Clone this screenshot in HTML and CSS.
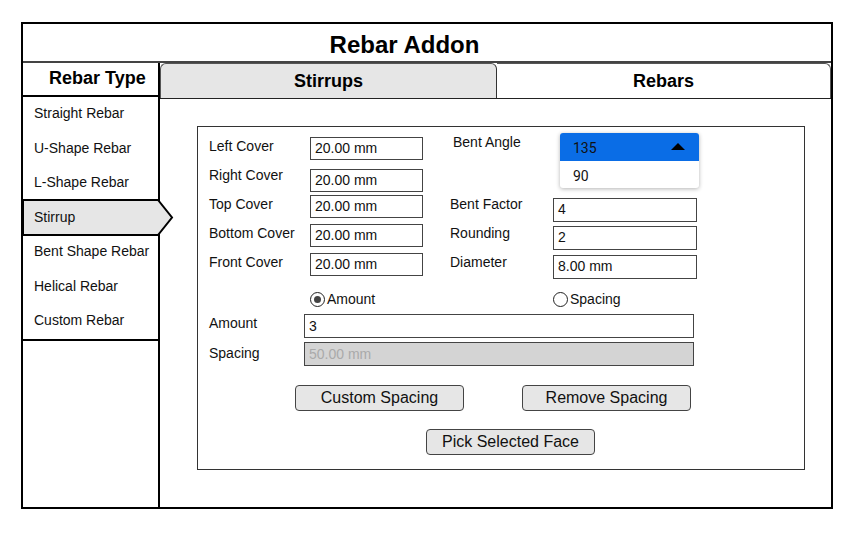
FILE: index.html
```html
<!DOCTYPE html>
<html>
<head>
<meta charset="utf-8">
<link rel="stylesheet" href="styles.css">
</head>
<body>
<div class="frame">
  <div class="header">Rebar Addon</div>
  <div class="body">
    <div class="sidebar">
      <div class="side-head">Rebar Type</div>
      <ul class="side-list">
        <li class="side-item">Straight Rebar</li>
        <li class="side-item">U-Shape Rebar</li>
        <li class="side-item">L-Shape Rebar</li>
        <li class="side-item selected">
          <svg class="sel-shape" width="152" height="38" viewBox="0 0 152 38">
            <polygon points="0,1 135,1 149,18.5 135,36 0,36" fill="#e6e6e6" stroke="#000" stroke-width="2"/>
          </svg>
          <span class="sel-label">Stirrup</span>
        </li>
        <li class="side-item">Bent Shape Rebar</li>
        <li class="side-item">Helical Rebar</li>
        <li class="side-item">Custom Rebar</li>
      </ul>
    </div>
    <div class="main">
      <div class="tabs">
        <div class="tab tab-active">Stirrups</div>
        <div class="tab tab-plain">Rebars</div>
      </div>
      <div class="panel">
        <div class="grid">
          <div class="lbl">Left Cover</div>
          <div class="inp inp-l">20.00 mm</div>
          <div></div>
          <div class="lbl lbl-r lbl-up">Bent Angle</div>
          <div></div>

          <div class="lbl">Right Cover</div>
          <div class="inp inp-l inp-down">20.00 mm</div>
          <div></div><div></div><div></div>

          <div class="lbl">Top Cover</div>
          <div class="inp inp-l">20.00 mm</div>
          <div></div>
          <div class="lbl lbl-r2">Bent Factor</div>
          <div class="inp inp-r inp-r3">4</div>

          <div class="lbl">Bottom Cover</div>
          <div class="inp inp-l">20.00 mm</div>
          <div></div>
          <div class="lbl lbl-r2">Rounding</div>
          <div class="inp inp-r">2</div>

          <div class="lbl">Front Cover</div>
          <div class="inp inp-l">20.00 mm</div>
          <div></div>
          <div class="lbl lbl-r2">Diameter</div>
          <div class="inp inp-r">8.00 mm</div>

          <div></div>
          <div class="radio-wrap"><span class="radio checked"></span>Amount</div>
          <div></div><div></div>
          <div class="radio-wrap"><span class="radio"></span>Spacing</div>
        </div>

        <div class="field-row">
          <div class="flbl">Amount</div>
          <div class="inp inp-wide">3</div>
        </div>
        <div class="field-row">
          <div class="flbl flbl-2">Spacing</div>
          <div class="inp inp-wide disabled">50.00 mm</div>
        </div>

        <div class="btn-row btn-row-1">
          <div class="btn">Custom Spacing</div>
          <div class="btn">Remove Spacing</div>
        </div>
        <div class="btn-row btn-row-2">
          <div class="btn">Pick Selected Face</div>
        </div>

        <div class="dropdown">
          <div class="dd-opt dd-sel"><span>135</span><span class="dd-caret"></span></div>
          <div class="dd-opt">90</div>
        </div>
      </div>
    </div>
  </div>
</div>
</body>
</html>
```
FILE: styles.css
```css
* { box-sizing: border-box; }
html, body { margin: 0; padding: 0; background: #fff; }
body { font-family: "Liberation Sans", Arial, sans-serif; color: #111; }

.frame {
  margin: 22px 0 0 21px;
  width: 812px;
  height: 487px;
  border: 2px solid #000;
  display: flex;
  flex-direction: column;
}

.header {
  height: 39px;
  border-bottom: 2px solid #444;
  font-size: 24px;
  font-weight: bold;
  text-align: center;
  line-height: 42px;
  padding-right: 45px;
  color: #000;
}

.body { flex: 1; display: flex; }

.sidebar {
  width: 137px;
  border-right: 2px solid #000;
  flex: none;
}
.side-head {
  height: 34px;
  border-bottom: 2px solid #000;
  font-size: 18px;
  font-weight: bold;
  line-height: 31px;
  padding-left: 26px;
  color: #000;
}
.side-list {
  list-style: none;
  margin: 0;
  padding: 0;
  border-bottom: 2px solid #000;
}
.side-item {
  height: 34.5px;
  line-height: 33px;
  padding-left: 11px;
  font-size: 14px;
  color: #111;
  position: relative;
}
.sel-shape {
  position: absolute;
  left: 0;
  top: -2px;
  z-index: 2;
  overflow: visible;
}
.sel-label { position: relative; z-index: 3; }

.main { flex: 1; display: flex; flex-direction: column; }

.tabs {
  height: 36px;
  display: flex;
  align-items: flex-end;
  border-bottom: 1px solid #222;
}
.tab {
  height: 35px;
  font-size: 18px;
  font-weight: bold;
  text-align: center;
  line-height: 34px;
  color: #000;
}
.tab-active {
  width: 337px;
  background: #e6e6e6;
  border-radius: 6px 6px 0 0;
  border-top: 1px solid #555;
  border-left: 1px solid #555;
  border-right: 1px solid #333;
}
.tab-plain {
  flex: 1;
  background: #fff;
  border-radius: 0 6px 0 0;
  border-top: 1px solid #555;
  border-right: 1px solid #555;
}

.panel {
  position: relative;
  margin: 27px 0 0 37px;
  width: 608px;
  height: 344px;
  border: 1px solid #333;
  padding: 10px 0 0 11px;
}

.grid {
  display: grid;
  grid-template-columns: 101px 113px 29px 101px 144px;
  grid-template-rows: 29px 29px 29px 29px 29px 30px;
}
.lbl {
  font-size: 14px;
  line-height: 18px;
  color: #111;
  white-space: nowrap;
}
.lbl-r { padding-left: 1px; }
.lbl-up { margin-top: -4px; }
.lbl-r2 { padding-left: 0; margin-left: -2px; }

.inp {
  height: 23px;
  border: 1px solid #444;
  background: #fff;
  font-size: 14px;
  line-height: 21px;
  padding-left: 4px;
  color: #111;
  white-space: nowrap;
}
.inp-down { margin-top: 3px; }
.inp-r { height: 24px; margin-top: 2px; }
.inp-r3 { margin-top: 3px; }

.radio-wrap {
  display: flex;
  align-items: center;
  font-size: 14px;
  color: #111;
  gap: 2px;
  padding-top: 4px;
}
.radio {
  width: 15px;
  height: 15px;
  border: 1px solid #222;
  border-radius: 50%;
  display: flex;
  align-items: center;
  justify-content: center;
  background: #fff;
}
.radio.checked::after {
  content: "";
  width: 7px;
  height: 7px;
  border-radius: 50%;
  background: #444;
}

.field-row {
  display: flex;
  margin-top: 2px;
}
.field-row + .field-row { margin-top: 4px; }
.flbl {
  width: 95px;
  font-size: 14px;
  line-height: 18px;
  color: #111;
}
.flbl-2 { padding-top: 2px; }
.inp-wide {
  width: 390px;
  height: 24px;
  line-height: 22px;
}
.inp.disabled {
  background: #d4d4d4;
  color: #aaa;
}

.btn-row { display: flex; }
.btn-row-1 { margin-top: 19px; padding-left: 86px; gap: 58px; }
.btn-row-2 { margin-top: 18px; padding-left: 217px; }
.btn {
  width: 169px;
  height: 26px;
  background: #e6e6e6;
  border: 1px solid #444;
  border-radius: 4px;
  font-size: 16px;
  line-height: 24px;
  text-align: center;
  color: #111;
}

.dropdown {
  position: absolute;
  left: 362px;
  top: 6px;
  width: 139px;
  height: 55px;
  border-radius: 3px;
  background: #fff;
  box-shadow: 0 1px 4px rgba(0,0,0,0.3);
  overflow: hidden;
  font-family: Roboto, "Noto Sans", sans-serif;
  font-size: 14px;
  color: #111;
}
.dd-opt {
  height: 27px;
  line-height: 31px;
  padding-left: 13px;
}
.dd-sel {
  height: 28px;
  background: #0a6de6;
  display: flex;
  justify-content: space-between;
  align-items: center;
  line-height: normal;
  padding-top: 2px;
  padding-right: 14px;
}
.dd-caret {
  width: 0;
  height: 0;
  border-left: 7px solid transparent;
  border-right: 7px solid transparent;
  border-bottom: 7px solid #000;
  margin-top: -4px;
}
```
